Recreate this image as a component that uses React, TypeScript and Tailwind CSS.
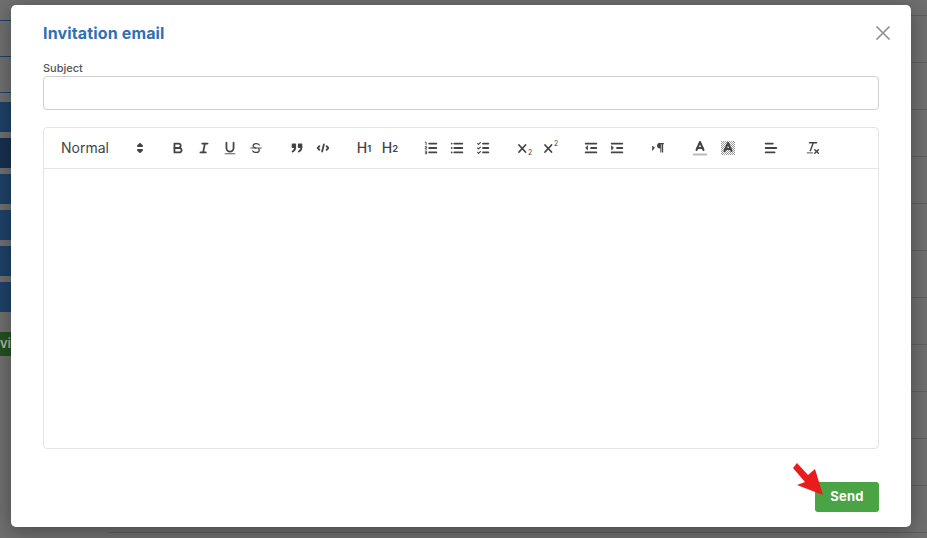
import React from "react";

const Ico = ({ children }: { children: React.ReactNode }) => (
  <button className="flex h-[24px] w-[26px] items-center justify-center">
    <svg
      viewBox="0 0 18 18"
      className="h-[16px] w-[16px]"
      fill="none"
      stroke="#444"
      strokeWidth="2"
      strokeLinecap="round"
      strokeLinejoin="round"
    >
      {children}
    </svg>
  </button>
);

const Group = ({ children }: { children: React.ReactNode }) => (
  <span className="mr-[15px] flex items-center">{children}</span>
);

const Heading = ({ n }: { n: string }) => (
  <button className="flex h-[24px] w-[26px] items-center justify-center text-[#444]">
    <span className="text-[14px] leading-none font-medium">H</span>
    <span className="mt-[3px] text-[9.5px] leading-none font-semibold">{n}</span>
  </button>
);

const Script = ({ n, up }: { n: string; up?: boolean }) => (
  <button className="relative flex h-[24px] w-[26px] items-center justify-center">
    <svg viewBox="0 0 18 18" className="h-[18px] w-[18px]" fill="none" stroke="#444" strokeWidth="1.8" strokeLinecap="round">
      <line x1="4" x2="10.5" y1="6" y2="13" />
      <line x1="10.5" x2="4" y1="6" y2="13" />
    </svg>
    <span
      className={
        up
          ? "absolute top-[4px] left-[17px] text-[7px] leading-none text-[#444]"
          : "absolute top-[13px] left-[17px] text-[7px] leading-none text-[#444]"
      }
    >
      {n}
    </span>
  </button>
);

const Toolbar = () => (
  <div className="flex h-[41px] items-center border-b border-[#e4e4e4] pb-[1px] pl-[8px]">
    {/* Format picker */}
    <div className="mr-[15px] flex w-[98px] items-center justify-between pl-[9px] text-[14px] text-[#444]">
      <span>Normal</span>
      <svg viewBox="0 0 18 18" className="h-[18px] w-[18px] translate-x-[-1px]" fill="#444" stroke="#444" strokeWidth="2" strokeLinejoin="round">
        <polygon points="7 11 9 13 11 11 7 11" />
        <polygon points="7 7 9 5 11 7 7 7" />
      </svg>
    </div>

    <Group>
      <Ico>
        <path d="M5,4H9.5A2.5,2.5,0,0,1,12,6.5v0A2.5,2.5,0,0,1,9.5,9H5V4Z" />
        <path d="M5,9h5.5A2.5,2.5,0,0,1,13,11.5v0A2.5,2.5,0,0,1,10.5,14H5V9Z" />
      </Ico>
      <Ico>
        <line x1="7" x2="13" y1="4" y2="4" />
        <line x1="5" x2="11" y1="14" y2="14" />
        <line x1="8" x2="10" y1="14" y2="4" />
      </Ico>
      <Ico>
        <path d="M5,3V9a4,4,0,0,0,4,4h0a4,4,0,0,0,4-4V3" />
        <line x1="3.5" x2="14.5" y1="15.5" y2="15.5" strokeWidth="1" />
      </Ico>
      <Ico>
        <path strokeWidth="1.4" d="M12.7 5.6C12.2 4.6 10.9 4 9.2 4 7.2 4 5.7 5 5.7 6.6c0 1.6 1.6 2.2 3.3 2.6" />
        <path strokeWidth="1.4" d="M5.4 12.3c.5 1.1 1.8 1.7 3.7 1.7 2 0 3.5-1 3.5-2.6 0-.7-.2-1.2-.6-1.6" />
        <line x1="3" x2="15" y1="9" y2="9" strokeWidth="1" />
      </Ico>
    </Group>

    <Group>
      <Ico>
        <rect x="4" y="5" width="3" height="3" fill="#444" />
        <rect x="11" y="5" width="3" height="3" fill="#444" />
        <path d="M7,8c0,4.03-3,5-3,5" />
        <path d="M14,8c0,4.03-3,5-3,5" />
      </Ico>
      <Ico>
        <polyline points="5 7 3 9 5 11" />
        <polyline points="13 7 15 9 13 11" />
        <line x1="10" x2="8" y1="5" y2="13" />
      </Ico>
    </Group>

    <Group>
      <Heading n="1" />
      <Heading n="2" />
    </Group>

    <Group>
      <Ico>
        <line x1="7" x2="15" y1="4" y2="4" />
        <line x1="7" x2="15" y1="9" y2="9" />
        <line x1="7" x2="15" y1="14" y2="14" />
        <path strokeWidth="1" d="M2.5 2.5h1v3M2.5 7.5h1.6v1.4H2.6v1.4h1.6M2.5 12.5h1.6v3H2.5M2.8 14h1.2" />
      </Ico>
      <Ico>
        <line x1="6" x2="15" y1="4" y2="4" />
        <line x1="6" x2="15" y1="9" y2="9" />
        <line x1="6" x2="15" y1="14" y2="14" />
        <line x1="3" x2="3" y1="4" y2="4" />
        <line x1="3" x2="3" y1="9" y2="9" />
        <line x1="3" x2="3" y1="14" y2="14" />
      </Ico>
      <Ico>
        <line x1="9" x2="15" y1="4" y2="4" />
        <line x1="9" x2="15" y1="9" y2="9" />
        <line x1="9" x2="15" y1="14" y2="14" />
        <polyline strokeWidth="1.3" points="3 4 4 5 6 3" />
        <polyline strokeWidth="1.3" points="3 9 4 10 6 8" />
        <polyline strokeWidth="1.3" points="3 14 4 15 6 13" />
      </Ico>
    </Group>

    <Group>
      <Script n="2" />
      <Script n="2" up />
    </Group>

    <Group>
      <Ico>
        <line x1="3" x2="15" y1="14" y2="14" />
        <line x1="3" x2="15" y1="4" y2="4" />
        <line x1="9" x2="15" y1="9" y2="9" />
        <polygon points="5 7 5 11 3 9 5 7" fill="#444" strokeWidth="1" />
      </Ico>
      <Ico>
        <line x1="3" x2="15" y1="14" y2="14" />
        <line x1="3" x2="15" y1="4" y2="4" />
        <line x1="9" x2="15" y1="9" y2="9" />
        <polygon points="3 7 3 11 5 9 3 7" fill="#444" strokeWidth="1" />
      </Ico>
    </Group>

    <Group>
      <Ico>
        <polygon points="3 11 5 9 3 7 3 11" fill="#444" strokeWidth="1" />
        <line x1="15" x2="10" y1="4" y2="4" strokeWidth="1.5" />
        <path fill="#444" stroke="none" d="M11 3.5a3 3 0 0 0 0 6h1v-6Z" />
        <rect x="11.6" y="3.5" width="1.2" height="10.5" fill="#444" stroke="none" />
        <rect x="13.4" y="3.5" width="1.4" height="10.5" fill="#444" stroke="none" />
      </Ico>
    </Group>

    <span className="mr-[15px] flex items-center">
      <span className="flex w-[28px] justify-center">
        <svg viewBox="0 0 18 18" className="h-[18px] w-[18px]" fill="none" stroke="#444" strokeWidth="2" strokeLinecap="round" strokeLinejoin="round">
          <line x1="3" x2="15" y1="15.5" y2="15.5" stroke="#bbb" strokeLinecap="square" />
          <polyline points="5.5 11 9 3 12.5 11" />
          <line x1="11.6" x2="6.4" y1="9" y2="9" />
        </svg>
      </span>
      <span className="flex w-[28px] justify-center">
        <svg viewBox="0 0 18 18" className="h-[18px] w-[18px]" fill="none" stroke="#444" strokeWidth="2" strokeLinecap="round" strokeLinejoin="round">
          <defs>
            <pattern id="hatch" width="2" height="2" patternUnits="userSpaceOnUse">
              <rect width="1" height="1" fill="#999" stroke="none" />
              <rect x="1" y="1" width="1" height="1" fill="#999" stroke="none" />
            </pattern>
          </defs>
          <rect x="2" y="2" width="14" height="14" fill="url(#hatch)" stroke="none" />
          <polyline points="5.5 12 9 4 12.5 12" />
          <line x1="11.6" x2="6.4" y1="10" y2="10" />
        </svg>
      </span>
    </span>

    <span className="mr-[15px] flex w-[28px] justify-center">
      <svg viewBox="0 0 18 18" className="h-[16px] w-[16px]" fill="none" stroke="#444" strokeWidth="2" strokeLinecap="round">
        <line x1="3" x2="11" y1="4" y2="4" />
        <line x1="3" x2="15" y1="9" y2="9" />
        <line x1="3" x2="13" y1="14" y2="14" />
      </svg>
    </span>

    <Ico>
      <line x1="5" x2="13" y1="3" y2="3" strokeWidth="1.6" />
      <line x1="6" x2="9.35" y1="12" y2="3" strokeWidth="1.6" />
      <line x1="11" x2="15" y1="11" y2="15" strokeWidth="1.6" />
      <line x1="15" x2="11" y1="11" y2="15" strokeWidth="1.6" />
      <line x1="2.5" x2="8.5" y1="14.5" y2="14.5" strokeWidth="1" />
    </Ico>
  </div>
);

const App = () => {
  return (
    <div className="relative flex h-[538px] w-[927px] overflow-hidden bg-[#6f6f6f] font-['Inter',sans-serif]">
      {/* Page behind the overlay */}
      <div className="w-[11px] shrink-0">
        <div className="mt-[20px] h-px bg-[#1f4268]" />
        <div className="mt-[35px] h-px bg-[#1f4268]" />
        <div className="mt-[35px] h-px bg-[#1f4268]" />
        <div className="mt-[9px] h-[30px] bg-[#1f4268]" />
        <div className="mt-[6px] h-[30px] bg-[#17304f]" />
        <div className="mt-[6px] h-[30px] bg-[#1f4268]" />
        <div className="mt-[6px] h-[30px] bg-[#1f4268]" />
        <div className="mt-[6px] h-[30px] bg-[#1f4268]" />
        <div className="mt-[6px] h-[30px] bg-[#1f4268]" />
        <div className="mt-[20px] flex h-[24px] items-center justify-end overflow-hidden bg-[#254f1f] text-[13px] font-semibold whitespace-nowrap text-[#a8b8a5]">
          vi
        </div>
      </div>
      <div className="flex-1">
        <div className="h-[16px] border-b border-[#5f5f5f]" />
        {[1, 2, 3, 4, 5, 6, 7, 8, 9, 10].map((r) => (
          <div key={r} className="h-[47px] border-b border-[#5f5f5f]" />
        ))}
        <div className="ml-[97px] h-[47px] border-b border-[#5f5f5f]" />
      </div>

      {/* Modal */}
      <div className="absolute top-[5px] left-[11px] flex h-[522px] w-[900px] flex-col rounded-[5px] bg-white px-[32px] shadow-[0_4px_20px_rgba(0,0,0,0.35)]">
        <div className="flex h-[54px] items-center justify-between pt-[1px]">
          <h2 className="text-[16px] font-bold tracking-[0.15px] text-[#2f70b5]">Invitation email</h2>
          <svg viewBox="0 0 16 16" className="mr-[-12px] h-[16px] w-[16px]" fill="none" stroke="#8f8f8f" strokeWidth="1.7">
            <path d="M1.5 1.5l13 13M14.5 1.5l-13 13" />
          </svg>
        </div>
        <label className="mt-[2px] h-[14px] text-[11px] leading-[14px] font-medium text-[#555]">Subject</label>
        <input className="mt-[1px] h-[34px] w-full rounded-[4px] border border-[#cfcfcf] outline-none" />
        <div className="mt-[17px] h-[322px] rounded-[4px] border border-[#e4e4e4]">
          <Toolbar />
        </div>
        <div className="mt-[33px] flex justify-end">
          <div className="relative">
            <button className="h-[30px] w-[64px] rounded-[3px] bg-[#4aa345] text-[13px] font-bold tracking-[0.3px] text-white">
              Send
            </button>
            {/* Red arrow annotation */}
            <svg viewBox="0 0 32 34" className="absolute top-[-20px] left-[-23px] h-[34px] w-[32px]" fill="#e81c1c">
              <path d="M5 1L16 13 23 7 31 33 5 23 13 20 1 6Z" />
            </svg>
          </div>
        </div>
      </div>
    </div>
  );
};

export default App;
